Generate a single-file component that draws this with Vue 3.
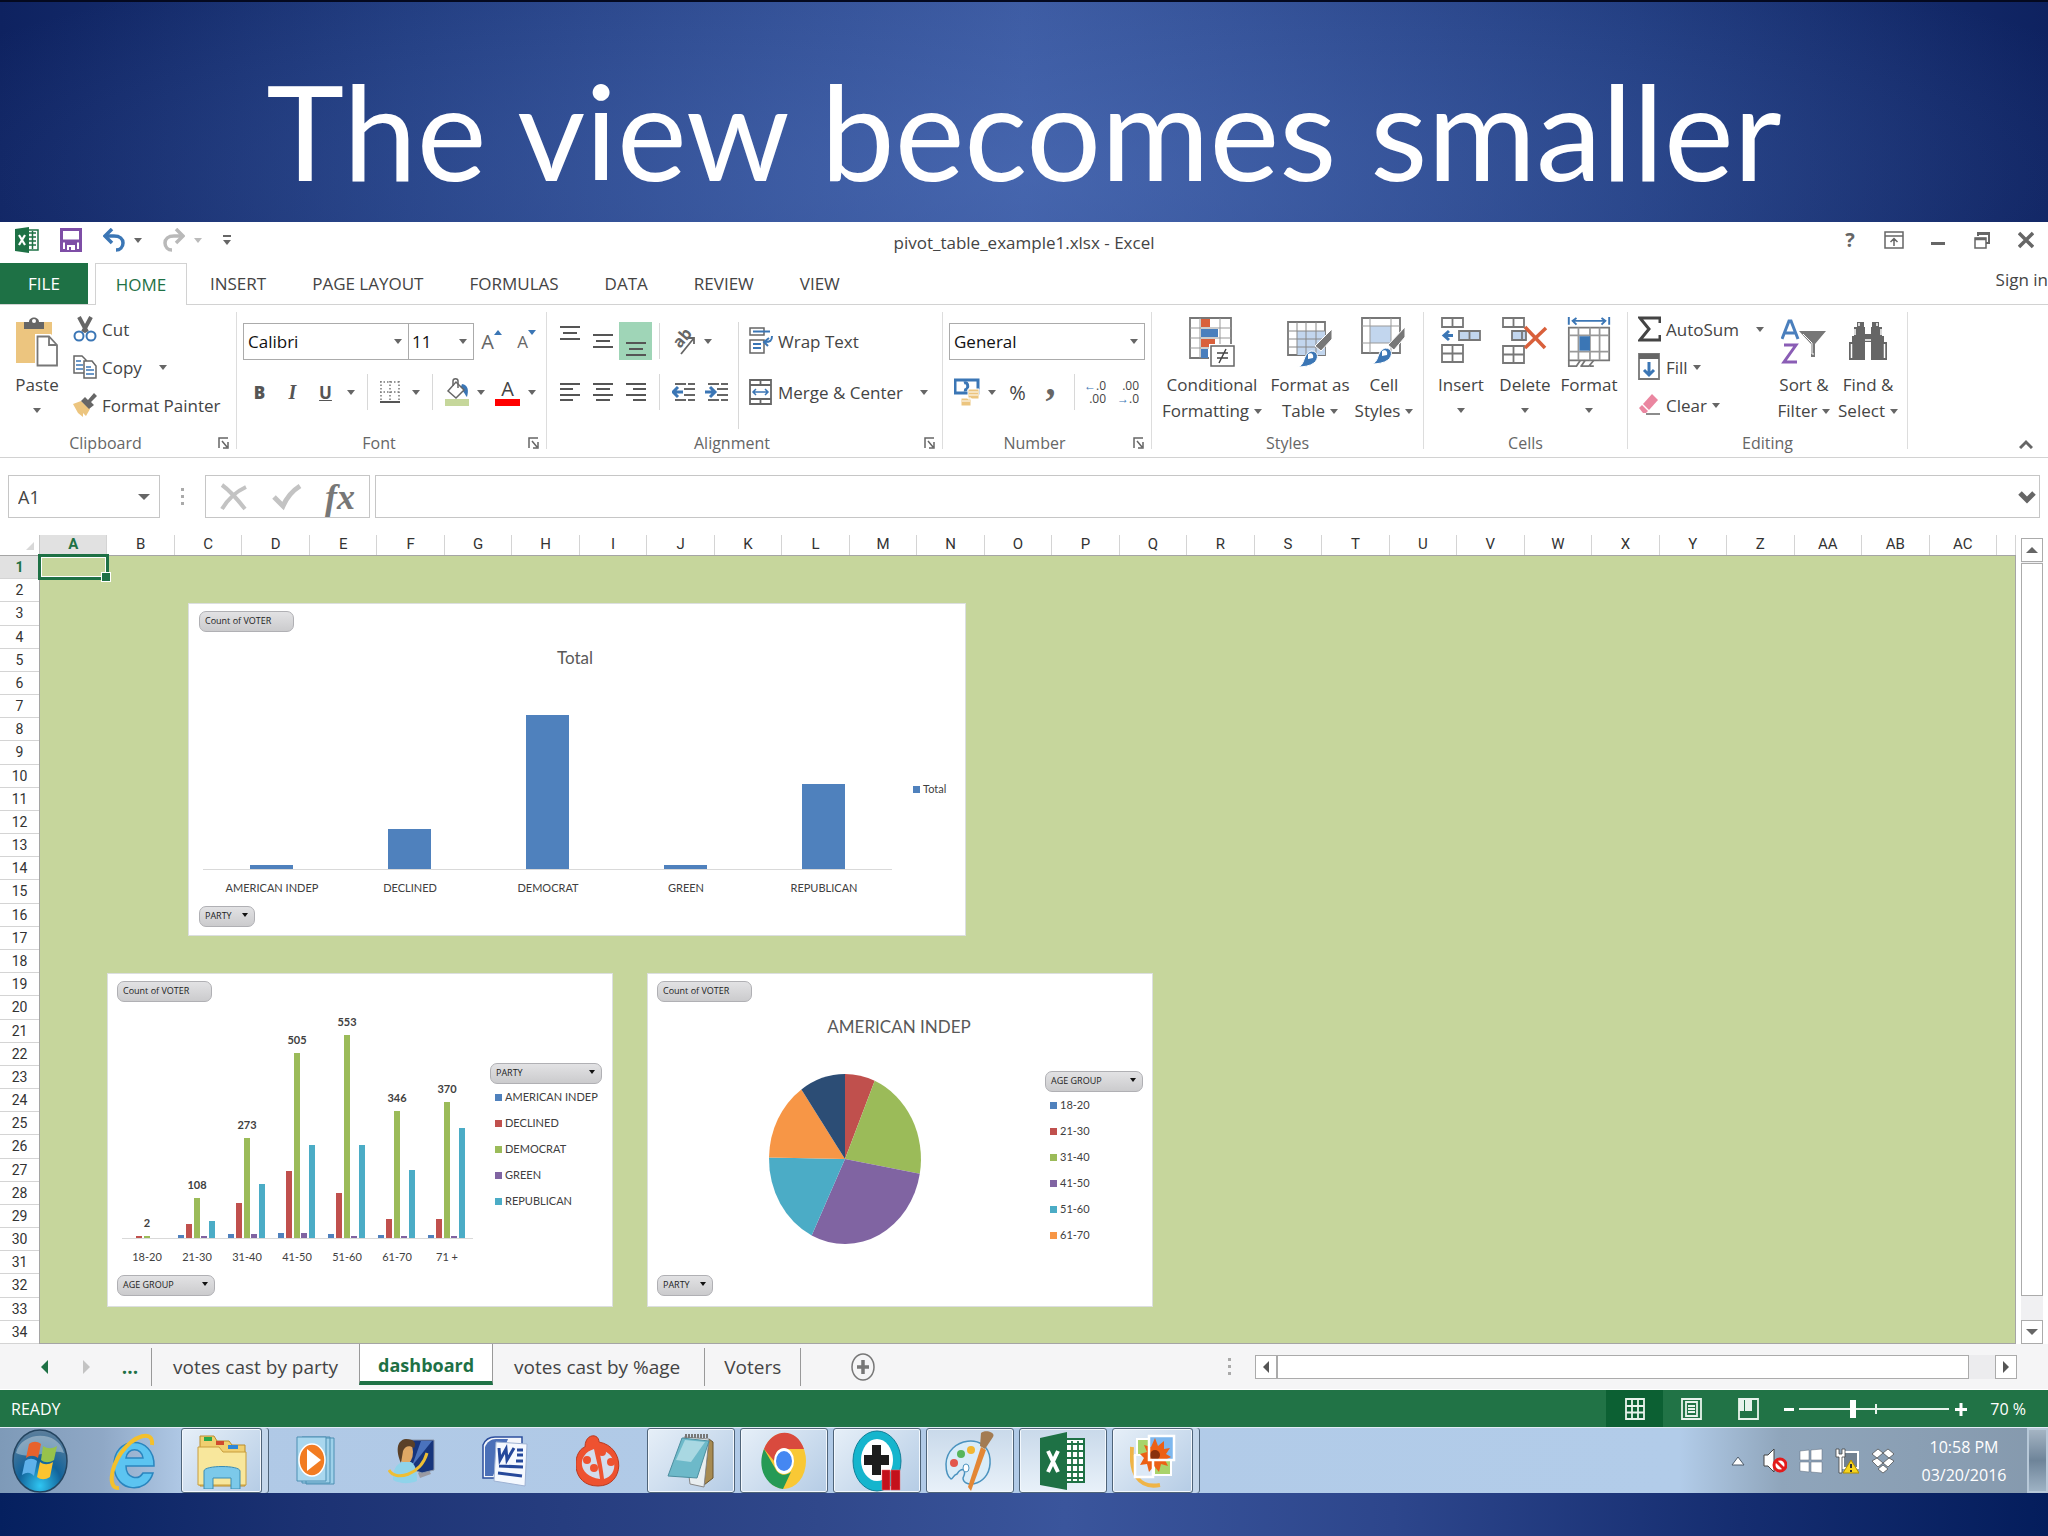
<template>
  <div class="slide">
    <header class="slide-title">
      <h1>The view becomes smaller</h1>
    </header>

    <main class="excel">
      <div class="titlebar">
        <div class="quick">
          <svg width="24" height="26" viewBox="0 0 24 26">
            <path d="M11 3h12v20H11z" fill="#fff" stroke="#1e7145" stroke-width="1.5" />
            <path d="M14 6h7M14 10h7M14 14h7M14 18h7M17.500 4v18" stroke="#1e7145" stroke-width="1.500" />
            <path d="M0 2 14 0v26L0 24z" fill="#1e7145" />
            <path d="m4 8 6 10M10 8 4 18" stroke="#fff" stroke-width="2.200" />
          </svg>
          <button class="plain" aria-label="Save">
            <svg width="22" height="24" viewBox="0 0 22 24">
              <path d="M1.500 1.500h19v21h-19z" fill="#fff" stroke="#7e4ea6" stroke-width="3" />
              <path d="M3 13h16" stroke="#7e4ea6" stroke-width="3" />
              <path d="M5 14h12v9H5z" fill="#7e4ea6" />
              <path d="M7 17h8v5h-4v-3H9v3H7z" fill="#fff" />
            </svg>
          </button>
          <button class="plain undo" aria-label="Undo">
            <svg width="22" height="24" viewBox="0 0 22 24">
              <path d="M2 8h9c6 0 9 3 9 7s-3 7-7 7" fill="none" stroke="#3b76b5" stroke-width="3.500" />
              <path d="M9 1 2 8l7 7" fill="none" stroke="#3b76b5" stroke-width="3.500" />
            </svg>
            <i class="caret"></i>
          </button>
          <button class="plain undo faded" aria-label="Redo">
            <svg width="22" height="24" viewBox="0 0 22 24">
              <path d="M20 8h-9c-6 0-9 3-9 7s3 7 7 7" fill="none" stroke="#b9b9b9" stroke-width="3.500" />
              <path d="m13 1 7 7-7 7" fill="none" stroke="#b9b9b9" stroke-width="3.500" />
            </svg>
            <i class="caret"></i>
          </button>
          <button class="plain customize" aria-label="Customize Quick Access Toolbar"><i class="caret"></i></button>
        </div>
        <div class="doc-name">pivot_table_example1.xlsx - Excel</div>
        <div class="window-buttons">
          <button class="plain help" aria-label="Help">?</button>
          <button class="plain" aria-label="Ribbon Display Options">
            <svg width="20" height="18" viewBox="0 0 20 18" fill="none" stroke="#666" stroke-width="1.500">
              <path d="M1 1h18v16H1zM1 5h18M10 15V8M6.500 11 10 7.500l3.500 3.500" />
            </svg>
          </button>
          <button class="plain" aria-label="Minimize">
            <svg width="14" height="18" viewBox="0 0 14 18"><path d="M0 11h14v3H0z" fill="#666" /></svg>
          </button>
          <button class="plain" aria-label="Restore">
            <svg width="16" height="18" viewBox="0 0 16 18" fill="none" stroke="#666">
              <path d="M4 5V2h11v10h-3M4 3h11" stroke-width="2" /><path d="M1 7h11v10H1z" stroke-width="1.500" /><path d="M1 8h11" stroke-width="2.500" />
            </svg>
          </button>
          <button class="plain" aria-label="Close">
            <svg width="16" height="18" viewBox="0 0 16 18"><path d="m1 2 14 14M15 2 1 16" stroke="#666" stroke-width="3.500" /></svg>
          </button>
        </div>
      </div>

      <nav class="ribbon-tabs">
        <button class="file">FILE</button>
        <button
          v-for="tab in tabs"
          :key="tab"
          :class="{ active: tab === activeTab }"
          @click="activeTab = tab"
        >{{ tab }}</button>
        <a href="#" class="sign-in">Sign in</a>
      </nav>

      <section class="ribbon">
        <div class="group g-clipboard">
          <div class="group-body">
            <button class="big">
              <svg width="42" height="50" viewBox="0 0 42 50">
                <path d="M0 5h36v41H0z" fill="#ecc57f" />
                <path d="M8 5h5c0-6 10-6 10 0h5v7H8z" fill="#666" /><circle cx="18" cy="4" r="2" fill="#fff" />
                <path d="M19 17h16l7 9v24H19z" fill="#fff" />
                <path d="M21.500 19.500H33l8 8.500v20.500H21.500zM33 20v8h8" fill="#fff" stroke="#777" stroke-width="1.800" />
              </svg>
              <span>Paste</span>
              <i class="caret"></i>
            </button>
            <div class="stack">
              <button class="small">
                <svg width="24" height="26" viewBox="0 0 24 26">
                  <path d="m6 1 8 15M18 1l-8 15" stroke="#666" stroke-width="4" />
                  <circle cx="6" cy="20" r="4.500" fill="#fff" stroke="#3b76b5" stroke-width="2" />
                  <circle cx="18" cy="20" r="4.500" fill="#fff" stroke="#3b76b5" stroke-width="2" />
                </svg>
                Cut
              </button>
              <button class="small">
                <svg width="24" height="26" viewBox="0 0 24 26" fill="#fff">
                  <path d="M1 2h8l4 4v13H1z" stroke="#666" stroke-width="1.500" />
                  <path d="M3 7h5M3 11h7M3 15h7" stroke="#3b76b5" stroke-width="1.500" />
                  <path d="M11 7h8l4 5v12H11z" stroke="#666" stroke-width="1.500" />
                  <path d="M13 13h5M13 16h8M13 20h8" stroke="#3b76b5" stroke-width="1.500" />
                </svg>
                Copy <i class="caret far"></i>
              </button>
              <button class="small">
                <svg width="24" height="26" viewBox="0 0 24 26">
                  <path d="m0 12 8-3 9 8-4 7-3-3v4l-5-4z" fill="#ecc57f" />
                  <path d="m8 9 4-4 3 3 6-7 3 3-6 6 3 3-5 4z" fill="#666" />
                </svg>
                Format Painter
              </button>
            </div>
          </div>
          <div class="group-label"><span>Clipboard</span><Launcher /></div>
        </div>

        <div class="group g-font">
          <div class="group-body rows">
            <div class="row">
              <label class="combo font-name"><select aria-label="Font"><option>Calibri</option></select><i class="caret"></i></label>
              <label class="combo font-size"><select aria-label="Font Size"><option>11</option></select><i class="caret"></i></label>
              <button class="tool t36 grow" aria-label="Increase Font Size">A<svg width="8" height="5"><path d="M0 5 4 0l4 5z" fill="#3b76b5" /></svg></button>
              <button class="tool t36 shrink" aria-label="Decrease Font Size">A<svg width="8" height="5"><path d="m0 0 4 5 4-5z" fill="#3b76b5" /></svg></button>
            </div>
            <div class="row">
              <button class="tool t33 letter"><b>B</b></button>
              <button class="tool t33 letter"><em>I</em></button>
              <button class="tool t33 letter"><u>U</u></button>
              <button class="tool t20" aria-label="Underline options"><i class="caret"></i></button>
              <hr>
              <button class="tool split" aria-label="Borders">
                <svg width="20" height="22" viewBox="0 0 20 22">
                  <path d="M0 1h20M0 11h20M1 0v20M10 0v20M19 0v20" stroke="#777" stroke-width="1.500" stroke-dasharray="1.500 2" />
                  <path d="M0 21h20" stroke="#555" stroke-width="2" />
                </svg>
                <i class="caret"></i>
              </button>
              <hr>
              <button class="tool split tight" aria-label="Fill Color">
                <svg width="24" height="28" viewBox="0 0 24 28">
                  <path d="M17 6c6 1 7 6 5 13-2-2-3-6-7-8z" fill="#3b76b5" />
                  <path d="m3 13 8-9 8 8-8 8z" fill="#fff" stroke="#666" stroke-width="1.500" />
                  <path d="M8 8V3c0-3 5-3 5 0v7" fill="none" stroke="#666" stroke-width="1.500" />
                  <path d="M0 21h24v7H0z" fill="#c6d79b" />
                </svg>
                <i class="caret"></i>
              </button>
              <button class="tool split tight font-color" aria-label="Font Color">
                <span>A</span>
                <i class="caret"></i>
              </button>
            </div>
          </div>
          <div class="group-label"><span>Font</span><Launcher /></div>
        </div>

        <div class="group g-align">
          <div class="group-body">
            <div class="rows">
              <div class="row">
                <button v-for="v in ['top', 'mid', 'bottom']" :key="v" class="tool t33" :class="['v-' + v]" :aria-label="v + ' align'">
                  <svg width="20" height="14" viewBox="0 0 20 14"><path d="M0 1h20M3 7h14M0 13h20" stroke="#555" stroke-width="2" /></svg>
                </button>
                <hr>
                <button class="tool orient" aria-label="Orientation">
                  <svg width="26" height="28" viewBox="0 0 26 28">
                    <text x="0" y="0" transform="translate(9 22) rotate(-50)" class="ab">ab</text>
                    <path d="M10 27 23 11M17 11h6v6" fill="none" stroke="#666" stroke-width="1.800" />
                  </svg>
                  <i class="caret"></i>
                </button>
              </div>
              <div class="row">
                <button v-for="d in alignLines" :key="d" class="tool t33" aria-label="Align text">
                  <svg width="20" height="18" viewBox="0 0 20 18"><path :d="d" stroke="#555" stroke-width="2" /></svg>
                </button>
                <hr>
                <button class="tool t33 indent" aria-label="Decrease Indent">
                  <svg width="24" height="18" viewBox="0 0 24 18">
                    <path d="M3 1h20M12 6h11M12 12h11M3 17h20" stroke="#666" stroke-width="2" stroke-dasharray="11 2" />
                    <path d="M11 9H2M6 4 1 9l5 5" fill="none" stroke="#3b76b5" stroke-width="3" />
                  </svg>
                </button>
                <button class="tool t33 indent" aria-label="Increase Indent">
                  <svg width="24" height="18" viewBox="0 0 24 18">
                    <path d="M3 1h20M12 6h11M12 12h11M3 17h20" stroke="#666" stroke-width="2" stroke-dasharray="11 2" />
                    <path d="M0 9h9M5 4l5 5-5 5" fill="none" stroke="#3b76b5" stroke-width="3" />
                  </svg>
                </button>
              </div>
            </div>
            <div class="rows wrap-col">
              <div class="row">
                <button class="small">
                  <svg width="24" height="28" viewBox="0 0 24 28" fill="none">
                    <path d="M1 1h14v7H1zM1 13h14v13H1z" stroke="#666" stroke-width="1.500" />
                    <path d="M4 4.500h17M4 17h8M4 21h8M23 9c0 5-2 6-7 6M20 11l-5 4 4 4" stroke="#3b76b5" stroke-width="2" />
                  </svg>
                  Wrap Text
                </button>
              </div>
              <div class="row">
                <button class="small">
                  <svg width="24" height="26" viewBox="0 0 24 26" fill="none">
                    <path d="M1 1h21v24H1zM1 6h21M1 20h21M11.500 1v5M11.500 20v5" stroke="#666" stroke-width="1.800" />
                    <path d="M4 13h15M7 10l-3 3 3 3M16 10l3 3-3 3" stroke="#3b76b5" stroke-width="1.500" />
                  </svg>
                  Merge &amp; Center <i class="caret far"></i>
                </button>
              </div>
            </div>
          </div>
          <div class="group-label"><span>Alignment</span><Launcher /></div>
        </div>

        <div class="group g-number">
          <div class="group-body rows">
            <div class="row">
              <label class="combo number-format"><select aria-label="Number Format"><option>General</option></select><i class="caret"></i></label>
            </div>
            <div class="row">
              <button class="tool split tight" aria-label="Accounting Number Format">
                <svg width="26" height="28" viewBox="0 0 26 28">
                  <path d="M1 2h23v13H1z" fill="#fff" stroke="#3b76b5" stroke-width="3" />
                  <path d="M10 5c5-2 5 8 0 7" fill="none" stroke="#3b76b5" stroke-width="3" />
                  <path d="M14 11h11v10H14zM7 20h10v8H7z" fill="#ecc57f" stroke="#fff" />
                  <path d="M15 14h9M15 17h9M8 23h8" stroke="#fff" />
                </svg>
                <i class="caret"></i>
              </button>
              <button class="tool t33 percent">%</button>
              <button class="tool t33 comma" aria-label="Comma Style">,</button>
              <hr>
              <button class="tool t33 decimals" aria-label="Increase Decimal"><span><b>←</b>.0</span><span>.00</span></button>
              <button class="tool t33 decimals" aria-label="Decrease Decimal"><span>.00</span><span><b>→</b>.0</span></button>
            </div>
          </div>
          <div class="group-label"><span>Number</span><Launcher /></div>
        </div>

        <div class="group g-styles">
          <div class="group-body">
            <button class="big">
              <svg width="46" height="50" viewBox="0 0 46 50">
                <path d="M1 1h41v40H1z" fill="#fff" stroke="#777" stroke-width="1.800" />
                <path d="M11 1v40M31 1v40M1 11h41M1 21h41M1 31h41" stroke="#999" />
                <path d="M12 2h9v8h-9zM12 22h14v8H12z" fill="#d9603b" />
                <path d="M12 12h17v8H12zM12 32h7v9h-7z" fill="#4a7fbd" />
                <path d="M20 27h26v23H20z" fill="#fff" />
                <path d="M22 29h23v20H22z" fill="#fff" stroke="#666" stroke-width="1.500" />
                <path d="M28 36h11M28 41h11M37 32l-7 14" stroke="#444" stroke-width="1.500" />
              </svg>
              <span>Conditional</span>
              <span>Formatting<i class="caret"></i></span>
            </button>
            <button class="big">
              <svg width="46" height="50" viewBox="0 0 46 50">
                <path d="M1 5h37v33H1z" fill="#fff" stroke="#777" stroke-width="1.800" />
                <path d="M10 14h28v24H10z" fill="#c2d6ee" />
                <path d="M10 5v33M19 5v33M29 5v33M1 14h37M1 22h37M1 30h37" stroke="#888" />
                <path d="M45 12v10L34 34l-6-5z" fill="#777" stroke="#fff" />
                <path d="M10 50c9-1 5-13 14-16 8 0 8 8 3 12-4 3-10 4-17 4z" fill="#3b76b5" stroke="#fff" />
                <path d="M21 37c3-2 6 0 5 4l-5 1z" fill="#fff" />
              </svg>
              <span>Format as</span>
              <span>Table<i class="caret"></i></span>
            </button>
            <button class="big">
              <svg width="46" height="50" viewBox="0 0 46 50">
                <path d="M1 1h38v35H1z" fill="#fff" stroke="#777" stroke-width="1.800" />
                <path d="M9 9h21v17H9z" fill="#c2d6ee" />
                <path d="M9 1v35M30 1v35M1 9h38M1 26h38" stroke="#999" />
                <path d="M44 10v10L33 33l-6-5z" fill="#777" stroke="#fff" />
                <path d="M10 47c9-1 5-13 14-16 8 0 8 8 3 12-4 3-10 4-17 4z" fill="#3b76b5" stroke="#fff" />
                <path d="M21 34c3-2 6 0 5 4l-5 1z" fill="#fff" />
              </svg>
              <span>Cell</span>
              <span>Styles<i class="caret"></i></span>
            </button>
          </div>
          <div class="group-label"><span>Styles</span></div>
        </div>

        <div class="group g-cells">
          <div class="group-body">
            <button class="big">
              <svg width="40" height="50" viewBox="0 0 40 50" fill="none" stroke="#777" stroke-width="1.800">
                <path d="M1 1h21v9H1zM11.500 1v9M1 28h21v17H1zM11.500 28v17M1 36.500h21" />
                <path d="M18 14h21v9H18zM28.500 14v9" fill="#c2d6ee" />
                <path d="M12 18.500H3M8 14l-5 4.500 5 4.500" stroke="#3b76b5" stroke-width="3" />
              </svg>
              <span>Insert</span>
              <i class="caret"></i>
            </button>
            <button class="big">
              <svg width="46" height="50" viewBox="0 0 46 50" fill="none" stroke="#777" stroke-width="1.800">
                <path d="M1 1h21v9H1zM11.500 1v9M1 29h21v17H1zM11.500 29v17M1 37.500h21" />
                <path d="M10 14h14v9H10zM20 14v9" fill="#c2d6ee" />
                <path d="m23 10 20 21M44 11 23 31" stroke="#d9603b" stroke-width="3.500" />
              </svg>
              <span>Delete</span>
              <i class="caret"></i>
            </button>
            <button class="big">
              <svg width="46" height="52" viewBox="0 0 46 52" fill="none" stroke="#777" stroke-width="1.800">
                <path d="M2 0v8M44 0v8M6 4h34M10 1 6 4l4 4M36 1l4 3-4 4" stroke="#3b76b5" stroke-width="2" />
                <path d="M2 11h42v34H2z" fill="#fff" />
                <path d="M12 11v34M24 11v34M34 11v34M2 19h42M2 36h42" stroke="#999" />
                <path d="M13 20h11v15H13z" fill="#3b76b5" stroke="none" />
                <path d="M2 45v6h8l4-6M14 51h9l5-6M19 45l-4 6M28 51h-4" />
              </svg>
              <span>Format</span>
              <i class="caret"></i>
            </button>
          </div>
          <div class="group-label"><span>Cells</span></div>
        </div>

        <div class="group g-editing">
          <div class="group-body">
            <div class="stack">
              <button class="small">
                <svg width="23" height="26" viewBox="0 0 23 26">
                  <path d="M22 7V2H2l9 11L2 24h20v-5" fill="none" stroke="#444" stroke-width="3" />
                </svg>
                AutoSum <i class="caret far"></i>
              </button>
              <button class="small">
                <svg width="23" height="28" viewBox="0 0 23 28">
                  <path d="M1 1h20v25H1z" fill="#fff" stroke="#777" stroke-width="1.800" />
                  <path d="M1 1h20v5H1z" fill="#666" />
                  <path d="M11 9v13M6 17l5 5 5-5" fill="none" stroke="#3b76b5" stroke-width="3" />
                </svg>
                Fill<i class="caret"></i>
              </button>
              <button class="small">
                <svg width="23" height="26" viewBox="0 0 23 26">
                  <path d="m5 12 9-10 6 6-9 10z" fill="#ea86a0" /><path d="m4 13 6 6-2 2H5l-4-5z" fill="#ea86a0" />
                  <path d="M8 22h14" stroke="#666" stroke-width="1.500" />
                </svg>
                Clear<i class="caret"></i>
              </button>
            </div>
            <button class="big">
              <svg width="46" height="50" viewBox="0 0 46 50">
                <path d="m1 22 7-18h2l7 18M4 16h10" fill="none" stroke="#4a7fbd" stroke-width="3" />
                <path d="M3 28h12L3 45h13" fill="none" stroke="#8a5db5" stroke-width="3" />
                <path d="M18 14h27L34 27v13h-4V27z" fill="#777" /><path d="m22 17 9 9v11h2" fill="none" stroke="#fff" />
              </svg>
              <span>Sort &amp;</span>
              <span>Filter<i class="caret"></i></span>
            </button>
            <button class="big">
              <svg width="40" height="50" viewBox="0 0 40 50" fill="#666">
                <path d="M9 5h7v5H9zM24 5h7v5h-7zM6 10h11v9H6zM23 10h11v9H23zM4 19h32v6H4zM1 25h16v18H1zM23 25h16v18H23z" />
                <path d="M17 17h6v3h-6z" /><path d="M3.500 27v14M36.500 27v14M7 12v6M33 12v6M11 6v3M29 6v3M17 23h6" stroke="#fff" stroke-width="1.500" />
              </svg>
              <span>Find &amp;</span>
              <span>Select<i class="caret"></i></span>
            </button>
          </div>
          <div class="group-label"><span>Editing</span></div>
        </div>

        <button class="plain collapse" aria-label="Collapse the Ribbon">
          <svg width="14" height="10"><path d="m1 9 6-6 6 6" fill="none" stroke="#666" stroke-width="3" /></svg>
        </button>
      </section>

      <section class="formula-bar">
        <div class="name-box">
          <input v-model="cellName" aria-label="Name Box">
          <i class="caret"></i>
        </div>
        <div class="dots"><i></i><i></i><i></i></div>
        <div class="formula-actions">
          <button class="plain" aria-label="Cancel">
            <svg width="28" height="28" viewBox="0 0 28 28"><path d="M2 2c7 5 16 15 23 24M26 4C15 9 8 16 2 26" fill="none" stroke="#c3c3c3" stroke-width="4" /></svg>
          </button>
          <button class="plain" aria-label="Enter">
            <svg width="30" height="28" viewBox="0 0 30 28"><path d="m2 14 9 9C15 14 20 8 28 3" fill="none" stroke="#c3c3c3" stroke-width="5" /></svg>
          </button>
          <button class="plain fx" aria-label="Insert Function">fx</button>
        </div>
        <div class="formula-input">
          <input aria-label="Formula Bar">
          <button class="plain" aria-label="Expand Formula Bar">
            <svg width="18" height="14"><path d="m2 3 7 7 7-7" fill="none" stroke="#666" stroke-width="5" /></svg>
          </button>
        </div>
      </section>

      <section class="sheet">
        <div class="corner"><svg width="8" height="8"><path d="M8 0v8H0z" fill="#d8d8d8" /></svg></div>
        <div class="col-heads">
          <div v-for="c in columns" :key="c" :class="{ selected: c === 'A' }">{{ c }}</div>
          <div></div>
        </div>
        <div class="row-heads">
          <div v-for="r in 34" :key="r" :class="{ selected: r === 1 }">{{ r }}</div>
        </div>

        <div class="canvas">
          <div class="selection"></div>

          <article class="chart chart-total">
            <button class="field w94">Count of VOTER</button>
            <svg class="plot" width="690" height="274" viewBox="0 0 690 274">
              <text x="372" y="32" class="chart-title">Total</text>
              <path d="M0 237.500h689" class="axis" />
              <g v-for="(p, i) in partyTotals" :key="p.name">
                <rect :x="47 + i * 138" :y="237 - p.height" width="43" :height="p.height" fill="#4f81bd" />
                <text :x="69 + i * 138" y="260" class="mid">{{ p.name }}</text>
              </g>
            </svg>
            <div class="legend-box">
              <ul class="legend">
                <li><i :style="{ background: '#4f81bd' }"></i>Total</li>
              </ul>
            </div>
            <button class="field w55">PARTY<i class="caret dark"></i></button>
          </article>

          <article class="chart chart-age">
            <button class="field w94">Count of VOTER</button>
            <svg class="plot" width="352" height="272" viewBox="0 0 352 272">
              <path d="M0 236.500h351" class="axis" />
              <g v-for="(g, i) in ageGroups" :key="g.name">
                <rect
                  v-for="(b, j) in bars(g.votes)"
                  :key="j"
                  :x="6 + i * 50 + b.x"
                  :y="236 - b.height"
                  width="6"
                  :height="b.height"
                  :fill="series[j].color"
                />
                <text :x="25 + i * 50" :y="236 - barHeight(g.votes[2]) - 9" class="mid value">{{ g.votes[2] }}</text>
                <text :x="25 + i * 50" y="259" class="mid">{{ g.name }}</text>
              </g>
            </svg>
            <div class="legend-box">
              <button class="field wide">PARTY<i class="caret dark"></i></button>
              <ul class="legend">
                <li v-for="s in series" :key="s.name"><i :style="{ background: s.color }"></i>{{ s.name }}</li>
              </ul>
            </div>
            <button class="field w98">AGE GROUP<i class="caret dark"></i></button>
          </article>

          <article class="chart chart-pie">
            <button class="field w94">Count of VOTER</button>
            <svg class="plot" width="352" height="272" viewBox="0 0 352 272">
              <text x="242" y="31" class="chart-title">AMERICAN INDEP</text>
              <path v-for="s in slices" :key="s.color" :d="slicePath(s.from, s.to)" :fill="s.color" />
            </svg>
            <div class="legend-box">
              <button class="field w98">AGE GROUP<i class="caret dark"></i></button>
              <ul class="legend">
                <li v-for="a in pieLegend" :key="a.name"><i :style="{ background: a.color }"></i>{{ a.name }}</li>
              </ul>
            </div>
            <button class="field w55">PARTY<i class="caret dark"></i></button>
          </article>
        </div>

        <div class="v-scroll">
          <button class="arrow-btn" aria-label="Scroll up"><i class="caret up"></i></button>
          <div class="v-thumb"></div>
          <button class="arrow-btn" aria-label="Scroll down"><i class="caret"></i></button>
        </div>
      </section>

      <section class="sheet-tabs">
        <button class="plain nav-arrow" aria-label="Previous sheet"><svg width="7" height="14"><path d="M7 0v14L0 7z" fill="#1e7145" /></svg></button>
        <button class="plain nav-arrow" aria-label="Next sheet"><svg width="7" height="14"><path d="M0 0v14l7-7z" fill="#c3c3c3" /></svg></button>
        <button class="plain more">...</button>
        <button
          v-for="s in sheets"
          :key="s"
          class="sheet-tab"
          :class="{ active: s === activeSheet }"
          @click="activeSheet = s"
        >{{ s }}</button>
        <button class="plain add" aria-label="New sheet">
          <svg width="24" height="28" viewBox="0 0 24 28" fill="none" stroke="#777">
            <ellipse cx="12" cy="14" rx="11" ry="13" stroke-width="1.500" /><path d="M6 14h12M12 7v14" stroke-width="3.500" />
          </svg>
        </button>
        <div class="dots"><i></i><i></i><i></i></div>
        <div class="h-scroll">
          <button class="arrow-btn" aria-label="Scroll left"><i class="caret left"></i></button>
          <div class="h-thumb"></div>
          <button class="arrow-btn" aria-label="Scroll right"><i class="caret right"></i></button>
        </div>
      </section>

      <footer class="status">
        <span class="ready">READY</span>
        <button class="view current" aria-label="Normal">
          <svg width="20" height="22" viewBox="0 0 20 22" fill="none" stroke="#e8f3ec" stroke-width="1.800"><path d="M1 1h18v20H1zM7 1v20M13 1v20M1 8h18M1 14.500h18" /></svg>
        </button>
        <button class="view" aria-label="Page Layout">
          <svg width="21" height="22" viewBox="0 0 21 22" fill="none" stroke="#e8f3ec" stroke-width="1.800"><path d="M1 1h19v20H1zM5 4h11v14H5zM7 8h7M7 11h7M7 14h7" /></svg>
        </button>
        <button class="view" aria-label="Page Break Preview">
          <svg width="21" height="22" viewBox="0 0 21 22"><path d="M1 1h19v20H1z" fill="none" stroke="#e8f3ec" stroke-width="1.800" /><path d="M1 1h5v12H1zM7 1h7v12H7z" fill="#e8f3ec" /></svg>
        </button>
        <button class="zoom-btn" aria-label="Zoom out"><svg width="20" height="14"><path d="M5 6h10v3H5z" fill="#fff" /></svg></button>
        <input v-model="zoom" type="range" min="10" max="178" aria-label="Zoom">
        <button class="zoom-btn" aria-label="Zoom in"><svg width="20" height="14"><path d="M4 6h12v3H4zM8.500 1h3v13h-3z" fill="#fff" /></svg></button>
        <span class="percent-label">{{ zoom }} %</span>
      </footer>
    </main>

    <section class="taskbar">
      <button class="app" aria-label="Start">
        <svg width="56" height="64" viewBox="0 0 56 64">
          <defs>
            <radialGradient id="orb" cx=".5" cy=".9" r=".9">
              <stop offset="0" stop-color="#2fc6f2" /><stop offset=".45" stop-color="#12639a" /><stop offset="1" stop-color="#5e7f9c" />
            </radialGradient>
          </defs>
          <ellipse cx="28" cy="32" rx="27" ry="31" fill="url(#orb)" stroke="#24445f" stroke-width="1.500" />
          <path d="M4 24C9 2 46 0 52 24c-14-5-32 8-48 0z" fill="#fff" opacity=".35" />
          <path d="M17 15c4-3 8-3 12 0l-3 14c-4-3-8-3-12 0z" fill="#e8622c" />
          <path d="M31 17c5 3 9 3 14 0l-3 14c-5 3-9 3-13 0z" fill="#97c24b" />
          <path d="M13 32c4-3 8-3 12 0l-3 15c-4-4-7-4-12-1z" fill="#5eb1ea" />
          <path d="M28 33c4 3 8 3 13 0l-3 15c-5 3-9 3-13 0z" fill="#fbc430" />
        </svg>
      </button>
      <button class="app" aria-label="Internet Explorer">
        <svg width="48" height="60" viewBox="0 0 48 60">
          <path d="M46 35H18c0 12 12 15 17 7h10C39 63 8 62 6 36 4 4 47 3 46 35zM18 27h17c-1-11-16-11-17 0z" fill="#5cc4f1" stroke="#2a85be" stroke-width="1.500" />
          <path d="M44 14C46-2 26 4 13 22 2 38 0 58 11 57" fill="none" stroke="#f4c02c" stroke-width="4" />
        </svg>
      </button>
      <button class="app open stacked" aria-label="Windows Explorer">
        <svg width="50" height="56" viewBox="0 0 50 56">
          <path d="M3 3h14l3 5h12l3 4h13v41H3z" fill="#f0cf70" stroke="#b98c2c" />
          <path d="M7 4h8v4H7z" fill="#2aa84a" /><path d="M19 8h8v4h-8z" fill="#d04a2f" /><path d="M31 12h10v4H31z" fill="#2c86d8" />
          <path d="M1 14h21l4 5h23v33H1z" fill="#f8e79c" stroke="#c89d3d" />
          <path d="M7 56V38c0-6 36-6 36 0v18h-9V45H16v11z" fill="#7cc9ea" stroke="#3a8cb4" />
        </svg>
      </button>
      <button class="app" aria-label="Windows Media Player">
        <svg width="46" height="50" viewBox="0 0 46 50">
          <path d="M10 2h28v46H10zM6 1h28v46H6z" fill="#9ed1ea" stroke="#4d8fb3" /><path d="M1 1h29v44H1z" fill="#a9d7ee" stroke="#4d8fb3" />
          <ellipse cx="16" cy="24" rx="13" ry="16" fill="#f27c22" stroke="#fff" stroke-width="1.500" /><path d="M11 13v22l14-11z" fill="#fff" />
        </svg>
      </button>
      <button class="app" aria-label="Remote Assistance">
        <svg width="48" height="46" viewBox="0 0 48 46">
          <path d="m30 35 10-5 3 6-11 4z" fill="#9a9aa2" /><path d="M16 2h30v30l-12 3-14-5z" fill="#17357c" stroke="#8a96a8" /><path d="M33 3h11L24 28z" fill="#4a72bd" />
          <ellipse cx="18" cy="14" rx="7" ry="12" fill="#dfa865" /><path d="M13 25C8 14 8 2 18 1c8 0 11 4 8 9-5-3-9-2-11 3z" fill="#5a4028" />
          <path d="M5 42c0-11 3-15 9-18h9c5 3 6 10 6 19-7 3-17 3-24-1z" fill="#8fd3ea" />
          <path d="M1 32c6 12 32 5 38-17" fill="none" stroke="#eebe34" stroke-width="3" />
        </svg>
      </button>
      <button class="app" aria-label="Word">
        <svg width="48" height="52" viewBox="0 0 48 52">
          <path d="M2 43V10C4 5 8 2 14 2h27v41z" fill="#f3f6fb" stroke="#2d4f9d" stroke-width="1.500" />
          <path d="M4 41V12C6 7 10 4 15 4h12L12 41z" fill="#4b70b8" />
          <path d="m15 7 31 2-2 42-31-5z" fill="#f5f9ff" stroke="#9eb2d3" />
          <path d="m18 13 1 12 6-11 1 11 7-12M36 15h6M36 20h6M35 26h7M18 31l24 1M17 38l24 3" fill="none" stroke="#24489b" stroke-width="3" />
        </svg>
      </button>
      <button class="app" aria-label="Video tool">
        <svg width="44" height="52" viewBox="0 0 44 52">
          <path d="M9 12C9-2 23-2 23 7c27 5 26 44-1 44C-6 51-4 16 9 12z" fill="#ee5230" stroke="#b93a20" />
          <path d="M18 14c2 10 5 20 6 30-23-3-23-25-6-30zM23 14c19 4 20 26 5 30-1-9-3-20-5-30z" fill="#d3dcec" />
          <circle cx="11" cy="25" r="4" fill="#ee5230" /><circle cx="18" cy="33" r="4" fill="#ee5230" /><circle cx="26" cy="17" r="4" fill="#ee5230" /><circle cx="35" cy="27" r="4" fill="#ee5230" />
        </svg>
      </button>
      <button class="app open" aria-label="Notepad">
        <svg width="48" height="56" viewBox="0 0 48 56">
          <path d="m42 6 4 3v36l-9 7z" fill="#a78b52" stroke="#68552e" /><path d="m17 4 25 2-5 48-14-3z" fill="#e9eef0" stroke="#888" />
          <path d="m15 5 27 3-12 37L1 43z" fill="#6db9c9" stroke="#4c8e9f" /><path d="m18 7 20 2-14 20-15-2z" fill="#a9d8e2" />
          <path d="M18 3h23" stroke="#777" stroke-width="4" stroke-dasharray="2 1" />
        </svg>
      </button>
      <button class="app open" aria-label="Chrome">
        <svg width="46" height="58" viewBox="0 0 46 58" >
          <ellipse cx="23" cy="29" rx="22" ry="28" fill="#f9c835" />
          <path d="M3 17C12-5 36-4 43 17H23c-7 0-10 5-9 13z" fill="#d94a3e" />
          <path d="M3 17C-5 37 6 55 22 57l8-17c-6 5-13 3-16-4z" fill="#259a55" />
          <ellipse cx="23" cy="29" rx="10" ry="13" fill="#fff" /><ellipse cx="23" cy="29" rx="8" ry="10" fill="#4587f2" />
        </svg>
      </button>
      <button class="app open" aria-label="Recorder">
        <svg width="50" height="62" viewBox="0 0 50 62">
          <ellipse cx="25" cy="31" rx="24" ry="30" fill="#15b5cd" stroke="#127f98" /><ellipse cx="25" cy="30" rx="16" ry="21" fill="#fff" />
          <path d="M20 15h9v10h8v10h-8v10h-9V35h-8V25h8z" fill="#1c1c1c" />
          <path d="M30 40h8v20h-8zM39 40h9v20h-9z" fill="#c4111b" stroke="#f0686c" stroke-width=".5" />
        </svg>
      </button>
      <button class="app open light" aria-label="Paint">
        <svg width="50" height="60" viewBox="0 0 50 60">
          <path d="M12 43c5-8 10-4 6 4 0 11 29 8 27-19C43 1 2 6 1 33c0 8 2 13 5 15 2 0 2-4 6-5z" fill="#d9ecf8" stroke="#4b93bf" stroke-width="1.500" />
          <circle cx="9" cy="32" r="4" fill="#e2574c" /><circle cx="16" cy="23" r="4" fill="#57b55a" /><circle cx="26" cy="19" r="4" fill="#f2b632" /><ellipse cx="21" cy="37" rx="3" ry="4" fill="#fff" stroke="#4b93bf" />
          <path d="m36 16 5 3-15 41-3-4z" fill="#e38734" /><path d="M36 2c4-4 15-1 12 4l-8 12-5-3z" fill="#a37b52" />
        </svg>
      </button>
      <button class="app open light" aria-label="Excel">
        <svg width="46" height="58" viewBox="0 0 46 58">
          <path d="M24 7h20v43H24z" fill="#fff" stroke="#1e7145" stroke-width="2" />
          <path d="M27 12h16M27 19h16M27 26h16M27 33h16M27 40h16M27 46h16M32 9v40M38 9v40" stroke="#1e7145" stroke-width="1.800" />
          <path d="m0 6 27-6v58L0 53z" fill="#1e7145" /><path d="m8 19 10 21M18 19 8 40" stroke="#fff" stroke-width="4" />
        </svg>
      </button>
      <button class="app open stacked" aria-label="Photo Gallery">
        <svg width="46" height="56" viewBox="0 0 46 56">
          <path d="M2 14c-2 26 6 42 28 38" fill="none" stroke="#efb447" stroke-width="4" />
          <path d="M7 6h15v16H7z" fill="#a9d36a" stroke="#fff" stroke-width="2" /><path d="M24 26h17v16H24z" fill="#a9d36a" stroke="#fff" stroke-width="2" />
          <path d="M5 22h18v22H5z" fill="#dce9f7" stroke="#fff" stroke-width="2" /><path d="M19 3h25v24H19z" fill="#7db7ee" />
          <path d="m25 5 3 8 6-5 0 8 6-1-4 6 5 3-6 3 3 6-7-2-2 8-5-6-5 6-2-8-7 1 4-7-4-4 7-2-3-7 7 2z" fill="#ec6015" />
          <circle cx="25" cy="22" r="5" fill="#8a310d" />
          <path d="M19 3h25v24H19zM5 22v22h18V27" fill="none" stroke="#fff" stroke-width="2.500" />
        </svg>
      </button>

      <div class="tray">
        <svg width="14" height="10"><path d="m1 9 6-8 6 8z" fill="#fff" stroke="#4c5b6b" /></svg>
        <svg width="24" height="26" viewBox="0 0 24 26">
          <path d="M1 7h4l6-6v23l-6-6H1z" fill="#fff" stroke="#444" /><circle cx="17" cy="17" r="6" fill="#fff" stroke="#e31b1b" stroke-width="3" /><path d="m13 13 8 8" stroke="#e31b1b" stroke-width="3" />
        </svg>
        <svg width="24" height="26" viewBox="0 0 24 26"><path d="m1 3 9-1v10H1zM12 2l11-1v11H12zM1 14h9v10l-9-1zM12 14h11v11l-11-1z" fill="#fff" stroke="#5d6b7a" stroke-width=".5" /></svg>
        <svg width="24" height="26" viewBox="0 0 24 26">
          <path d="M8 4h15v16H8z" fill="#718191" stroke="#fff" stroke-width="2" /><path d="M1 1v8h3v16h3V9h3V1H7v5H4V1z" fill="#fff" stroke="#444" stroke-width=".8" />
          <path d="m16 12 8 13H8z" fill="#f7d51d" stroke="#b08d00" /><path d="M16 16v4M16 22v2" stroke="#333" stroke-width="2" />
        </svg>
        <svg width="24" height="26" viewBox="0 0 24 26" fill="#fff" stroke="#444" stroke-width=".7">
          <path d="m7 1 5 4-6 5-5-4zM17 1l6 5-5 4-6-5zM1 13l5-3 6 5-5 4zM18 10l5 3-6 6-5-4zM12 17l5 4-5 4-5-4z" />
        </svg>
        <time>10:58 PM<br>03/20/2016</time>
        <button class="show-desktop" aria-label="Show desktop"></button>
      </div>
    </section>
  </div>
</template>

<script setup>
import { h, ref } from 'vue'

// small corner arrow that opens a group's dialog
const Launcher = () =>
  h('svg', { class: 'launcher', width: 11, height: 12, viewBox: '0 0 11 12', fill: 'none', stroke: '#666' }, [
    h('path', { d: 'M1 11V1h9M4 4l5 6M10 5v6H5', 'stroke-width': 1.5 }),
  ])

const tabs = ['HOME', 'INSERT', 'PAGE LAYOUT', 'FORMULAS', 'DATA', 'REVIEW', 'VIEW']
const activeTab = ref('HOME')
const sheets = ['votes cast by party', 'dashboard', 'votes cast by %age', 'Voters']
const activeSheet = ref('dashboard')
const cellName = ref('A1')
const zoom = ref(70)

const alignLines = [
  'M0 1h20M0 6h13M0 12h20M0 17h13',
  'M0 1h20M3 6h14M0 12h20M3 17h14',
  'M0 1h20M7 6h13M0 12h20M7 17h13',
]

const letters = 'ABCDEFGHIJKLMNOPQRSTUVWXYZ'.split('')
const columns = [...letters, 'AA', 'AB', 'AC']

const partyTotals = [
  { name: 'AMERICAN INDEP', height: 4 },
  { name: 'DECLINED', height: 40 },
  { name: 'DEMOCRAT', height: 154 },
  { name: 'GREEN', height: 4 },
  { name: 'REPUBLICAN', height: 85 },
]

const series = [
  { name: 'AMERICAN INDEP', color: '#4f81bd' },
  { name: 'DECLINED', color: '#c0504d' },
  { name: 'DEMOCRAT', color: '#9bbb59' },
  { name: 'GREEN', color: '#8064a2' },
  { name: 'REPUBLICAN', color: '#4bacc6' },
]

// votes follow the order of series
const ageGroups = [
  { name: '18-20', votes: [0, 2, 2, 0, 0] },
  { name: '21-30', votes: [7, 38, 108, 6, 46] },
  { name: '31-40', votes: [10, 96, 273, 10, 146] },
  { name: '41-50', votes: [14, 182, 505, 14, 255] },
  { name: '51-60', votes: [10, 124, 553, 6, 255] },
  { name: '61-70', votes: [7, 51, 346, 6, 186] },
  { name: '71 +', votes: [7, 51, 370, 6, 299] },
]

function barHeight(votes) {
  return votes ? Math.max(2, Math.round(votes * 0.3665)) : 0
}

function bars(votes) {
  return votes.map((v, j) => ({ x: Math.round(j * 7.75), height: barHeight(v) }))
}

const slices = [
  { from: 0, to: 23, color: '#c0504d' },
  { from: 23, to: 100, color: '#9bbb59' },
  { from: 100, to: 206, color: '#8064a2' },
  { from: 206, to: 271, color: '#4bacc6' },
  { from: 271, to: 325, color: '#f79646' },
  { from: 325, to: 360, color: '#2c4d75' },
]

function slicePath(from, to) {
  const cx = 188
  const cy = 157
  const rx = 76
  const ry = 85
  const at = (deg) => {
    const a = (deg * Math.PI) / 180
    return `${(cx + rx * Math.sin(a)).toFixed(1)} ${(cy - ry * Math.cos(a)).toFixed(1)}`
  }
  return `M${cx} ${cy}L${at(from)}A${rx} ${ry} 0 0 1 ${at(to)}Z`
}

const pieLegend = [
  { name: '18-20', color: '#4f81bd' },
  { name: '21-30', color: '#c0504d' },
  { name: '31-40', color: '#9bbb59' },
  { name: '41-50', color: '#8064a2' },
  { name: '51-60', color: '#4bacc6' },
  { name: '61-70', color: '#f79646' },
]
</script>

<style>
body {
  margin: 0;
  background: #0a1f5c;
}
</style>

<style scoped>
.slide {
  min-height: 100vh;
  display: flex;
  flex-direction: column;
  box-sizing: border-box;
  padding-bottom: 43px;
  background: linear-gradient(90deg, #05205f 0%, #1c3273 15%, #30488b 40%, #3a559c 52%, #2d468c 68%, #152d70 85%, #041d5c 100%);
  font-family: "Open Sans", "Noto Sans", sans-serif;
  font-size: 17px;
  color: #444;
  overflow: hidden;
}
.slide * {
  box-sizing: border-box;
}
button,
input,
select {
  font: inherit;
  color: inherit;
  background: none;
  border: 0;
  padding: 0;
  margin: 0;
  outline: 0;
}
button {
  white-space: nowrap;
}
svg {
  display: block;
  flex: none;
}
.slide-title {
  height: 222px;
  display: flex;
  align-items: center;
  justify-content: center;
  border-top: 2px solid #04091f;
  background:
    radial-gradient(ellipse 60% 120% at 50% 80%, rgba(84, 118, 192, 0.45), transparent),
    linear-gradient(90deg, #0e2260 0%, #1f3a7d 20%, #3a589f 50%, #1f3a7d 80%, #0e2260 100%);
}
.slide-title h1 {
  margin: 0;
  padding-top: 36px;
  font-family: Lato, Carlito, sans-serif;
  font-weight: 400;
  font-size: 132px;
  line-height: 160px;
  color: #fff;
}
.excel {
  flex: 1;
  display: flex;
  flex-direction: column;
  background: #fff;
}

/* shared bits */
.caret {
  display: inline-block;
  flex: none;
  width: 0;
  border: 4px solid transparent;
  border-top: 5px solid #666;
  border-bottom: 0;
}
.caret.up {
  border-top: 0;
  border-bottom: 5px solid #666;
}
.caret.left,
.caret.right {
  border: 6px solid transparent;
  border-left: 0;
  border-right: 6px solid #555;
}
.caret.right {
  border-right: 0;
  border-left: 6px solid #555;
}
.caret.dark {
  border-width: 3px;
  border-top: 4px solid #111;
  border-bottom: 0;
}
.arrow-btn .caret.up {
  border-width: 0 6px 6px;
}
.arrow-btn .caret:not(.up, .left, .right),
.name-box .caret {
  border-width: 6px 6px 0;
}
.plain {
  display: flex;
  align-items: center;
  justify-content: center;
}
.dots {
  display: flex;
  flex-direction: column;
  gap: 4px;
}
.dots i {
  width: 3px;
  height: 3px;
  background: #aaa;
}

/* title bar */
.titlebar {
  height: 41px;
  display: grid;
  grid-template-columns: 1fr auto 1fr;
  align-items: center;
}
.quick {
  display: flex;
  align-items: center;
  gap: 21px;
  padding: 0 0 5px 15px;
}
.undo {
  gap: 9px;
}
.faded .caret {
  border-top-color: #bbb;
}
.customize {
  border-top: 2px solid #666;
  padding-top: 3px;
}
.doc-name {
  line-height: 24px;
}
.window-buttons {
  display: flex;
  justify-content: flex-end;
  align-items: center;
  gap: 24px;
  padding: 0 12px 5px 0;
}
.window-buttons button {
  width: 20px;
}
.help {
  font-size: 20px;
  font-weight: 700;
  line-height: 20px;
  color: #666;
}

/* ribbon */
.ribbon-tabs {
  height: 42px;
  display: flex;
  border-bottom: 1px solid #d2d2d2;
}
.ribbon-tabs button {
  padding: 0 23px;
  line-height: 40px;
}
.ribbon-tabs .file {
  width: 88px;
  background: #1e7145;
  color: #fff;
  margin-right: 7px;
}
.ribbon-tabs .active {
  width: 92px;
  padding: 0;
  border: 1px solid #d2d2d2;
  border-bottom: 0;
  background: #fff;
  color: #1e7145;
  margin-bottom: -1px;
}
.sign-in {
  margin-left: auto;
  line-height: 34px;
  color: #444;
  text-decoration: none;
}
.ribbon {
  height: 153px;
  display: flex;
  padding: 7px 0 8px;
  border-bottom: 1px solid #d2d2d2;
}
.group {
  display: flex;
  flex-direction: column;
  border-right: 1px solid #ddd;
  flex: none;
}
.g-clipboard { width: 237px; }
.g-font { width: 310px; }
.g-align { width: 396px; }
.g-number { width: 209px; }
.g-styles { width: 272px; }
.g-cells { width: 204px; }
.g-editing { width: 280px; }
.group-body {
  flex: 1;
  display: flex;
}
.group-label {
  display: flex;
  align-items: center;
  line-height: 12px;
  font-size: 16px;
  color: #666;
}
.group-label span {
  flex: 1;
  text-align: center;
}
.group-label :deep(.launcher) {
  margin: 0 7px;
}
.rows {
  display: flex;
  flex-direction: column;
  gap: 13px;
  padding-top: 10px;
}
.g-font .rows,
.g-number .rows {
  padding-left: 6px;
}
.row {
  height: 38px;
  display: flex;
  align-items: center;
}
.row hr {
  width: 1px;
  height: 36px;
  margin: 0 7px;
  border: 0;
  background: #d8d8d8;
  flex: none;
}
.big {
  display: flex;
  flex-direction: column;
  align-items: center;
  padding-top: 5px;
  line-height: 26px;
}
.big svg {
  height: 50px;
  margin-bottom: 5px;
}
.big > .caret {
  margin-top: 10px;
}
.big span .caret {
  margin-left: 5px;
  vertical-align: 3px;
}
.g-clipboard .big {
  width: 68px;
  padding-left: 6px;
}
.stack {
  display: flex;
  flex-direction: column;
  gap: 4px;
}
.g-clipboard .stack {
  padding-left: 5px;
}
.small {
  height: 34px;
  display: flex;
  align-items: center;
  gap: 5px;
}
.caret.far {
  margin-left: 12px;
}
.combo {
  height: 37px;
  display: flex;
  align-items: center;
  border: 1px solid #ababab;
  padding: 0 6px 0 4px;
  color: #111;
}
.combo select {
  flex: 1;
  min-width: 0;
  appearance: none;
}
.font-name { width: 166px; }
.font-size { width: 66px; margin-left: -1px; padding-left: 3px; }
.number-format { width: 196px; }
.tool {
  height: 38px;
  display: flex;
  align-items: center;
  justify-content: center;
  flex: none;
}
.t20 { width: 18px; }
.t33 { width: 33px; }
.t36 { width: 35px; }
.grow {
  font-size: 20px;
  color: #666;
}
.shrink {
  font-size: 17px;
  color: #666;
}
.t36 svg {
  margin-bottom: 18px;
}
.letter {
  font-size: 17px;
  font-weight: 700;
  color: #555;
}
.letter em {
  font-family: "Liberation Serif", serif;
  font-size: 20px;
}
.split {
  gap: 12px;
  padding: 0 5px;
}
.split.tight {
  gap: 8px;
}
.font-color {
  font-size: 20px;
  line-height: 20px;
}
.font-color span {
  width: 25px;
  border-bottom: 7px solid #f00;
}
.g-align .group-body > .rows:first-child {
  padding-left: 6px;
}
.v-top svg { margin-bottom: 16px; }
.v-bottom {
  background: #9fd5b7;
}
.v-bottom svg { margin-top: 16px; }
.orient {
  gap: 7px;
  padding-left: 4px;
}
.orient svg {
  overflow: visible;
}
.ab {
  font: 700 16px "Open Sans", sans-serif;
  fill: #666;
}
.wrap-col {
  margin-left: 16px;
  position: relative;
}
.wrap-col::before {
  content: "";
  width: 1px;
  position: absolute;
  left: -11px;
  top: 10px;
  bottom: 8px;
  background: #d8d8d8;
}
.percent {
  font-size: 20px;
}
.comma {
  font: 700 40px/10px "Liberation Serif", serif;
  color: #666;
  padding-bottom: 20px;
}
.decimals {
  flex-direction: column;
  align-items: flex-end;
  padding-right: 9px;
  font-size: 12px;
  line-height: 13px;
}
.decimals b {
  color: #3b76b5;
}
.g-styles .group-body {
  padding-left: 6px;
  gap: 3px;
}
.g-styles .big:nth-child(1) { width: 108px; }
.g-styles .big:nth-child(2) { width: 82px; }
.g-styles .big:nth-child(3) { width: 60px; }
.g-cells .group-body {
  padding-left: 5px;
}
.g-cells .big { width: 64px; }
.g-editing .stack {
  width: 144px;
  padding-left: 10px;
}
.g-editing .big { width: 64px; }
.collapse {
  margin: auto 15px 0 auto;
}

/* formula bar */
.formula-bar {
  height: 77px;
  display: flex;
  align-items: center;
  padding: 0 8px;
}
.name-box,
.formula-actions,
.formula-input {
  height: 43px;
  display: flex;
  align-items: center;
  border: 1px solid #c6c6c6;
}
.name-box {
  width: 152px;
  padding: 0 9px;
}
.name-box input {
  width: 0;
  flex: 1;
  font-size: 18px;
}
.formula-bar .dots {
  margin: 0 21px;
}
.formula-actions {
  width: 165px;
  padding: 0 14px;
  justify-content: space-between;
  margin-right: 5px;
}
.fx {
  font: italic 700 36px/38px "Liberation Serif", serif;
  color: #777;
}
.formula-input {
  flex: 1;
  padding-right: 3px;
}
.formula-input input {
  flex: 1;
}

/* grid */
.sheet {
  flex: 1;
  display: grid;
  grid-template-columns: 40px 1fr 32px;
  grid-template-rows: 21px 1fr;
  font-family: Roboto, sans-serif;
  color: #333;
}
.corner {
  display: flex;
  justify-content: flex-end;
  align-items: flex-end;
  padding: 5px;
  border-right: 1px solid #c6c6c6;
  border-bottom: 1px solid #a5a5a5;
}
.col-heads {
  display: grid;
  grid-template-columns: repeat(29, 1fr) 19px;
  border-bottom: 1px solid #a5a5a5;
  font-size: 15px;
  line-height: 18px;
  text-align: center;
}
.col-heads div {
  border-right: 1px solid #d4d4d4;
}
.row-heads {
  grid-row: 2;
  display: grid;
  grid-template-rows: repeat(34, 1fr);
  border-right: 1px solid #a5a5a5;
  font-size: 14px;
  line-height: 22px;
  text-align: center;
}
.row-heads div {
  border-bottom: 1px solid #d4d4d4;
}
.sheet .selected {
  background: #e1e1e1;
  color: #1e7145;
  font-weight: 700;
}
.canvas {
  position: relative;
  min-height: 780px;
  background: #c6d69c;
  border-right: 1px solid #a5a5a5;
  border-bottom: 1px solid #a5a5a5;
}
.selection {
  position: absolute;
  left: -2px;
  top: -2px;
  width: 71px;
  height: 26px;
  border: 3px solid #1e7145;
  box-shadow: inset 0 0 0 1px #fff;
}
.selection::after {
  content: "";
  position: absolute;
  right: -5px;
  bottom: -5px;
  width: 8px;
  height: 8px;
  background: #1e7145;
  border: 1px solid #fff;
}
.chart {
  position: absolute;
  display: grid;
  grid-template-rows: 21px 1fr 21px;
  justify-items: start;
  background: #fff;
  border: 1px solid #dcdfe0;
  padding: 7px 9px 8px;
  font-family: Lato, sans-serif;
  font-size: 11px;
  color: #404040;
}
.chart > .field:first-child {
  grid-area: 1 / 1;
}
.chart > .field:last-child {
  grid-area: 3 / 1;
}
.chart > .plot {
  grid-area: 2 / 1;
}
.chart > .legend-box {
  grid-area: 2 / 2;
}
.chart-total {
  left: 148px;
  top: 47px;
  width: 778px;
  height: 333px;
  grid-template-columns: 714px 1fr;
  padding-left: 10px;
}
.chart-total .plot {
  margin-left: 4px;
}
.chart-age,
.chart-pie {
  top: 417px;
  width: 506px;
  height: 334px;
  padding-bottom: 10px;
}
.chart-age {
  left: 67px;
  grid-template-columns: 373px 1fr;
}
.chart-pie {
  left: 607px;
  grid-template-columns: 388px 1fr;
}
.chart-age .plot {
  margin-left: 5px;
}
.plot text {
  fill: #404040;
}
.plot .mid,
.plot .chart-title {
  text-anchor: middle;
}
.plot .value {
  font-weight: 700;
}
.plot .chart-title {
  font-size: 17px;
  fill: #595959;
}
.plot .axis {
  stroke: #d9d9d9;
  stroke-width: 1;
}
.field {
  height: 21px;
  display: flex;
  align-items: center;
  justify-content: space-between;
  padding: 0 6px 3px 5px;
  border: 1px solid #b0b0b4;
  border-radius: 7px;
  background: linear-gradient(#e2e2e4, #cbcbcd);
  font: 9px "Open Sans", sans-serif;
  color: #222;
}
.w94 { width: 95px; }
.w98 { width: 98px; }
.w55 { width: 56px; }
.field.wide { width: 112px; }
.legend {
  list-style: none;
  margin: 0;
  padding: 0;
  line-height: 26px;
}
.legend li {
  display: flex;
  align-items: center;
  gap: 3px;
  white-space: nowrap;
}
.legend i {
  width: 7px;
  height: 7px;
}
.legend-box {
  padding-top: 61px;
}
.legend-box .legend {
  padding-left: 5px;
}
.chart-pie .legend-box {
  padding-top: 69px;
}
.chart-total .legend-box {
  padding-top: 144px;
}
.chart-total .legend {
  padding: 0;
}

/* scroll bars */
.v-scroll {
  grid-row: 1 / 3;
  grid-column: 3;
  display: flex;
  flex-direction: column;
  margin: 3px 5px 0;
  background: #f0f0f2;
}
.arrow-btn {
  width: 22px;
  height: 24px;
  flex: none;
  display: flex;
  align-items: center;
  justify-content: center;
  border: 1px solid #ababab;
  background: #fff;
}
.v-thumb {
  flex: 1;
  margin: 1px 0 24px;
  border: 1px solid #ababab;
  background: #fff;
}

/* sheet tabs */
.sheet-tabs {
  height: 46px;
  display: flex;
  align-items: center;
  background: #f5f5f6;
  border-bottom: 1px solid #fff;
  padding: 0 31px 0 26px;
}
.nav-arrow {
  width: 36px;
  margin-right: 6px;
}
.more {
  width: 40px;
  font-size: 19px;
  font-weight: 700;
  color: #1e7145;
}
.sheet-tab {
  height: 38px;
  padding: 0 21px;
  font-size: 19px;
  border-left: 1px solid #999;
}
.more + .sheet-tab {
  margin-left: 1px;
}
.sheet-tab.active {
  height: 41px;
  align-self: flex-start;
  padding: 4px 18px 0;
  font-size: 18px;
  font-weight: 700;
  color: #1e7145;
  background: #fff;
  border-bottom: 4px solid #1e7145;
  border-right: 1px solid #999;
}
.sheet-tab.active + .sheet-tab {
  border-left: 0;
  padding-right: 24px;
}
.sheet-tab:nth-last-child(4) {
  padding: 0 19px;
  border-right: 1px solid #999;
}
.add {
  margin: 0 auto 0 50px;
}
.h-scroll {
  width: 762px;
  display: flex;
  margin-left: 24px;
  background: #ececee;
}
.h-thumb {
  flex: 1;
  margin-right: 26px;
  border: 1px solid #ababab;
  background: #fff;
}

/* status bar */
.status {
  height: 37px;
  display: flex;
  align-items: center;
  padding: 0 0 0 11px;
  background: #217346;
  color: #fff;
  font-size: 16px;
}
.ready {
  margin-right: auto;
}
.view {
  width: 57px;
  height: 37px;
  display: flex;
  align-items: center;
  justify-content: center;
}
.view.current {
  background: #0c6033;
}
.zoom-btn {
  width: 20px;
  height: 37px;
  display: flex;
  align-items: center;
}
.view + .zoom-btn {
  margin-left: 2px;
}
.status input {
  width: 150px;
  height: 20px;
  appearance: none;
  margin-right: 2px;
  background:
    linear-gradient(#e8f3ec, #e8f3ec) 76px 50% / 2px 10px no-repeat,
    linear-gradient(#e8f3ec, #e8f3ec) 0 50% / 100% 2px no-repeat;
}
.status input::-webkit-slider-thumb {
  appearance: none;
  width: 6px;
  height: 18px;
  background: #fff;
}
.percent-label {
  width: 77px;
  text-align: right;
  padding-right: 22px;
}

/* taskbar */
.taskbar {
  height: 66px;
  display: flex;
  border-top: 1px solid #e3ecf6;
  background: linear-gradient(90deg, #7e9ab8 0, #8fa8c6 5%, #b0c9e6 9%, #b2cce9 82%, #8fa5bb 87%, #8599ad 100%);
}
.app {
  width: 88px;
  margin-right: 5px;
  display: flex;
  align-items: center;
  justify-content: center;
  border-radius: 3px;
}
.app:first-child {
  width: 80px;
  margin: 0 8px 0 0;
}
.app.open {
  border: 1px solid #4f6479;
  box-shadow: inset 0 0 0 1px #f3f8fd;
  background: linear-gradient(135deg, #e6eff8, #b5cce5);
}
.app.light {
  background: linear-gradient(#c9d9ea, #e8f1f9);
}
.app.stacked {
  width: 81px;
  box-shadow: inset 0 0 0 1px #f3f8fd, 6px 0 0 #c3d6ea, 7px 0 0 #4f6479;
  margin-right: 13px;
}
.tray {
  margin-left: auto;
  display: flex;
  align-items: center;
  gap: 12px;
}
.tray svg:first-child {
  margin-right: 6px;
}
.tray time {
  width: 90px;
  margin: 0 6px 0 12px;
  font-size: 16px;
  line-height: 28px;
  text-align: center;
  color: #fff;
}
.show-desktop {
  align-self: stretch;
  width: 21px;
  border: 2px solid #b7c8d8;
  background: linear-gradient(#a4b4c3, #6e8499 50%, #9eb2c4);
}
</style>
